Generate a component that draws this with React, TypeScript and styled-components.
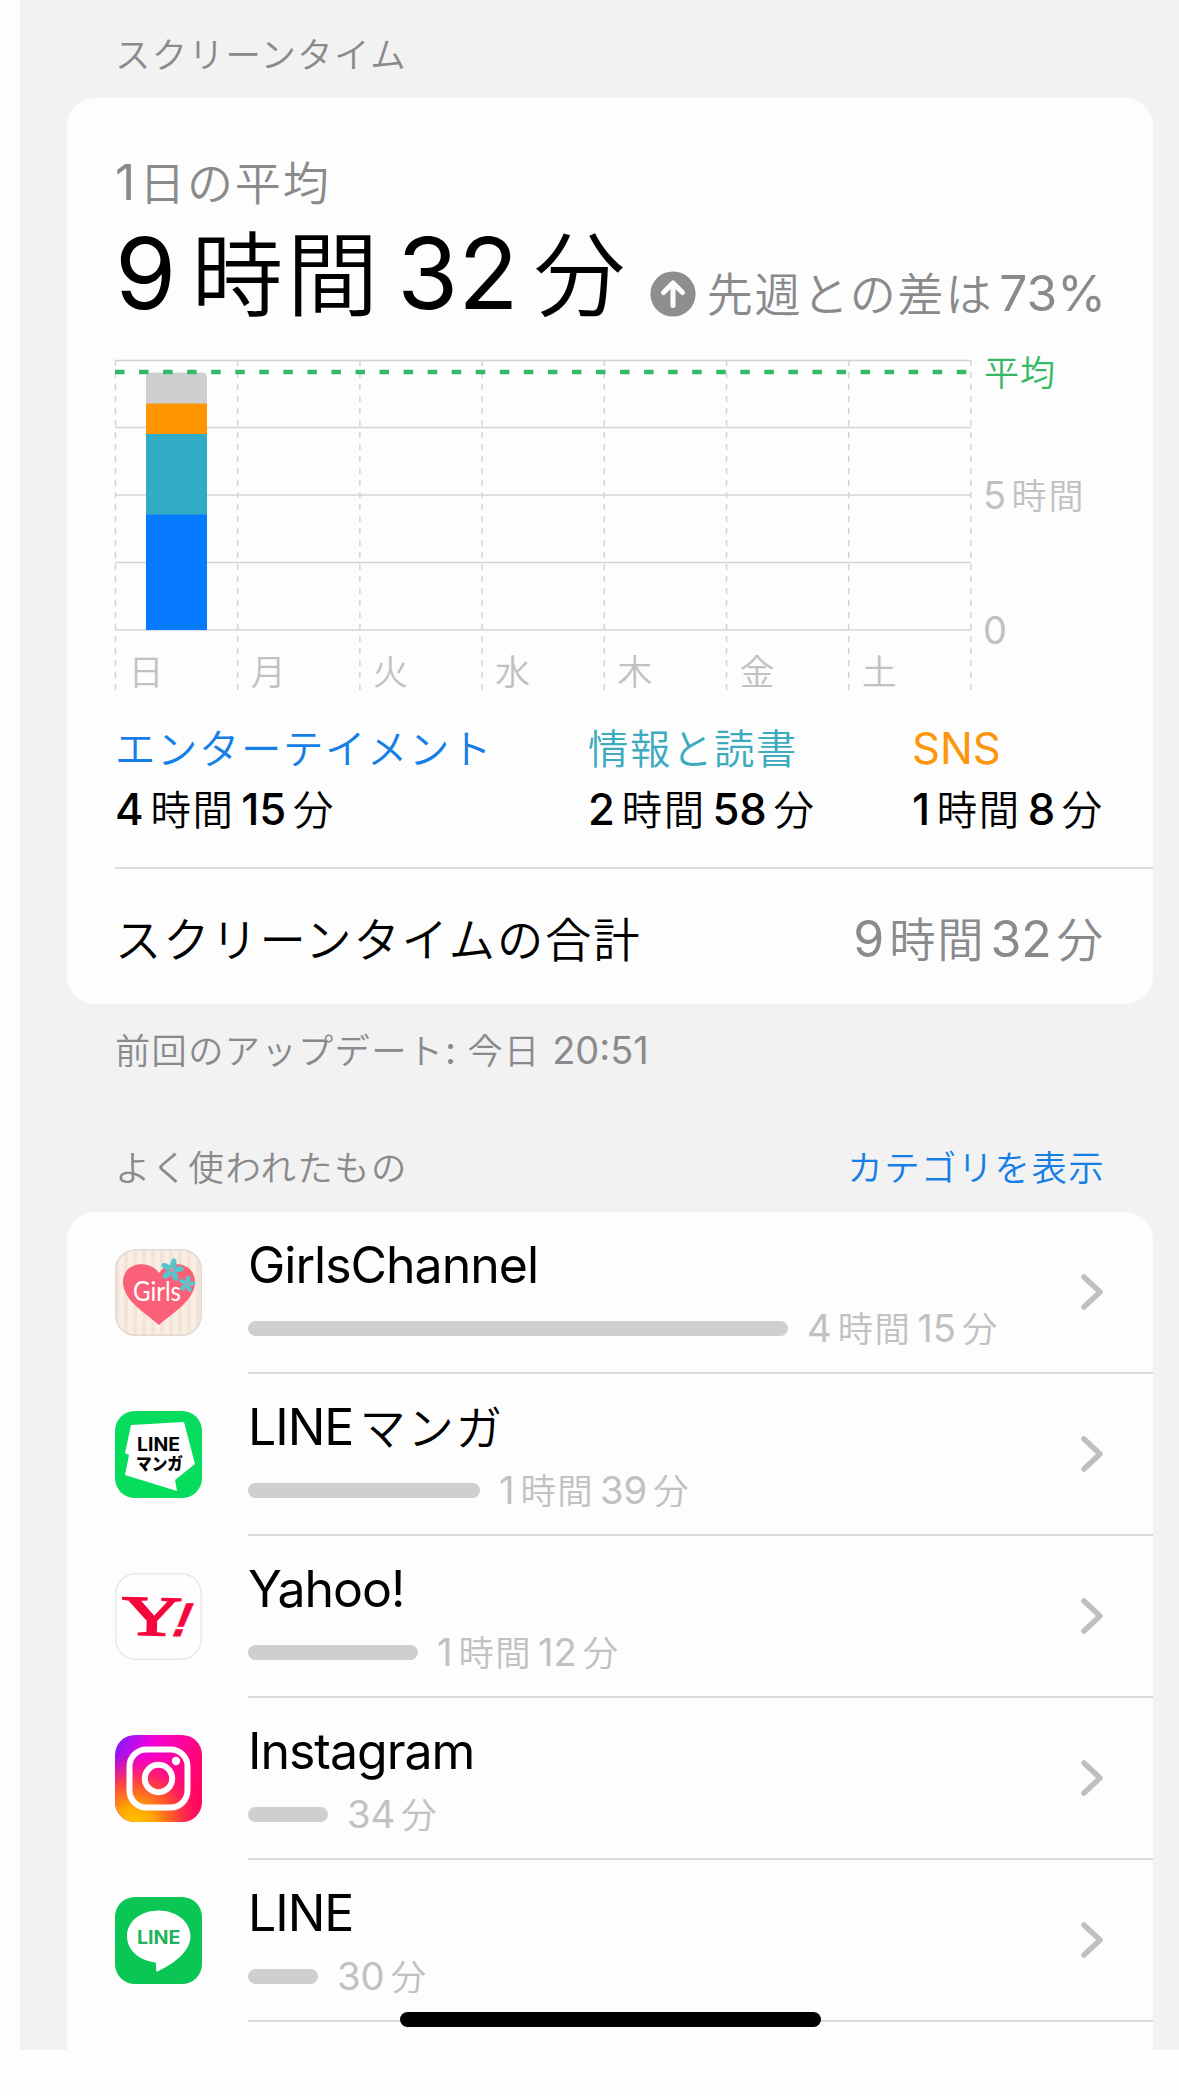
import React from "react";
import styled, { createGlobalStyle } from "styled-components";

const JP = `"Noto Sans CJK JP", sans-serif`;
const LATIN = `Inter, "Noto Sans CJK JP", sans-serif`;

const Global = createGlobalStyle`
  html, body { margin: 0; padding: 0; background: #fdfdfd; }
  * { box-sizing: border-box; }
`;

const Page = styled.div`
  position: relative;
  width: 1179px;
  height: 2096px;
  background: #fdfdfd;
  overflow: hidden;
  font-family: ${JP};
`;

const Sheet = styled.main`
  display: flex;
  flex-direction: column;
  height: 2050px;
  margin-left: 20px;
  padding: 37px 26px 0 47px;
  background: #f2f2f2;
  overflow: hidden;
`;

const SectionHead = styled.div<{ $height: number; $top?: number }>`
  display: flex;
  justify-content: space-between;
  height: ${(p) => p.$height}px;
  padding: ${(p) => p.$top ?? 0}px 48px 0;
`;

const Card = styled.section<{ $grow?: boolean }>`
  flex: ${(p) => (p.$grow ? "1 0 auto" : "0 0 auto")};
  background: #fdfdfd;
  border-radius: ${(p) => (p.$grow ? "28px 28px 0 0" : "28px")};
`;

const TextLine = styled.div<{
  $size: number;
  $lh: number;
  $color: string;
}>`
  font-family: ${JP};
  font-size: ${(p) => p.$size}px;
  line-height: ${(p) => p.$lh}px;
  letter-spacing: 0.04em;
  font-weight: 350;
  color: ${(p) => p.$color};
  white-space: pre;
`;

const Latin = styled.span<{ $before: number; $after: number; $weight: number; $track: number }>`
  font-family: ${LATIN};
  font-size: 1.08em;
  line-height: 0;
  font-weight: ${(p) => p.$weight};
  letter-spacing: ${(p) => p.$track}em;
  margin-left: ${(p) => p.$before}em;
  margin-right: ${(p) => p.$after}em;
`;

type LabelProps = {
  children: string;
  size: number;
  lh: number;
  color: string;
  gap?: number;
  latinWeight?: number;
  latinTrack?: number;
};

/* Sets Japanese and Latin runs in their own faces, with a little air between them. */
function Label({ children, size, lh, color, gap = 0.12, latinWeight = 400, latinTrack = 0 }: LabelProps) {
  const runs = children.match(/[\x20-\x7e]+|[^\x20-\x7e]+/g) ?? [];
  return (
    <TextLine $size={size} $lh={lh} $color={color}>
      {runs.map((run, i) =>
        /^[\x20-\x7e]/.test(run) ? (
          <Latin
            key={i}
            $before={i > 0 ? gap : 0}
            $after={i < runs.length - 1 ? gap : 0}
            $weight={latinWeight}
            $track={latinTrack}
          >
            {run}
          </Latin>
        ) : (
          <React.Fragment key={i}>{run}</React.Fragment>
        )
      )}
    </TextLine>
  );
}

const Summary = styled.div`
  display: flex;
  flex-direction: column;
  padding: 58px 0 36px 48px;
`;

const Headline = styled.div`
  display: flex;
  justify-content: space-between;
  align-items: flex-end;
  margin-top: 20px;
  padding-right: 47px;
`;

const Change = styled.div`
  display: flex;
  align-items: center;
  gap: 11px;
  margin-bottom: -3px;
`;

const UpIcon = styled.svg`
  width: 46px;
  height: 46px;
  margin-top: 7px;
`;

const Plot = styled.svg`
  display: block;
  overflow: visible;
  width: 1030px;
  height: 345px;
  margin: 36px 0 29px -2px;
`;

const Legend = styled.div`
  display: grid;
  grid-template-columns: 473px 324px auto;
`;

const LegendItem = styled.div`
  display: flex;
  flex-direction: column;
  gap: 15px;
`;

const TotalRow = styled.div`
  display: flex;
  justify-content: space-between;
  align-items: center;
  height: 137px;
  margin-left: 48px;
  padding-right: 48px;
  border-top: 2px solid #dcdcdd;
`;

const AppRow = styled.div`
  display: grid;
  grid-template-columns: 87px 1fr;
  align-items: center;
  column-gap: 46px;
  height: 162px;
  padding-left: 48px;
`;

const AppIcon = styled.svg`
  width: 87px;
  height: 87px;
  margin-bottom: 2px;
`;

const AppBody = styled.div`
  display: flex;
  justify-content: space-between;
  align-items: center;
  height: 162px;
  padding-right: 49px;
  border-bottom: 2px solid #dcdcdd;
`;

const AppInfo = styled.div`
  display: flex;
  flex-direction: column;
  gap: 21px;
  margin-top: -1px;
`;

const Usage = styled.div`
  display: flex;
  align-items: center;
  gap: 19px;
`;

const UsageBar = styled.div<{ $width: number }>`
  width: ${(p) => p.$width}px;
  height: 15px;
  margin-top: 3px;
  border-radius: 8px;
  background: #cfcfcf;
`;

const ChevronIcon = styled.svg`
  width: 24px;
  height: 38px;
`;

const HomeIndicator = styled.div`
  position: absolute;
  left: 400px;
  top: 2012px;
  width: 421px;
  height: 15px;
  border-radius: 8px;
  background: #000;
`;

const GREY = "#8a8a8c";
const LIGHT = "#c1c1c3";

const DAYS = ["日", "月", "火", "水", "木", "金", "土"];
const STEP = 122.2;

function WeekChart() {
  return (
    <Plot viewBox="113 350 1030 345">
      {[360.5, 427.5, 495, 562.5, 630].map((y) => (
        <line key={y} x1="115" x2="971" y1={y} y2={y} stroke="#d4d4d6" strokeWidth="1.6" />
      ))}
      {[0, 1, 2, 3, 4, 5, 6, 7].map((i) => (
        <line
          key={i}
          x1={115.5 + i * STEP}
          x2={115.5 + i * STEP}
          y1="360"
          y2="691"
          stroke="#d4d4d6"
          strokeWidth="1.5"
          strokeDasharray="6 6"
        />
      ))}
      <path d="M146 404V378q0-5.500 5.500-5.500h50q5.500 0 5.500 5.500V404z" fill="#cfcfcf" />
      <rect x="146" y="403.500" width="61" height="31" fill="#ff9500" />
      <rect x="146" y="434" width="61" height="81" fill="#30adc4" />
      <rect x="146" y="514.500" width="61" height="115.500" fill="#067bff" />
      <line x1="115" x2="970" y1="372" y2="372" stroke="#36b966" strokeWidth="4.500" strokeDasharray="9.500 14.550" />
      {DAYS.map((d, i) => (
        <text
          key={d}
          x={146 + i * STEP}
          y="684.500"
          textAnchor="middle"
          fontFamily={JP}
          fontWeight="350"
          fontSize="35"
          fill={LIGHT}
        >
          {d}
        </text>
      ))}
      <g fontFamily={JP} fontWeight="350" fontSize="35" fill={LIGHT}>
        <text x="984" y="385.500" fill="#36b966" letterSpacing="1">平均</text>
        <text x="983" y="508.500">
          <tspan fontFamily={LATIN} fontWeight="400" fontSize="38">5</tspan>
          <tspan dx="5.500" letterSpacing="2">時間</tspan>
        </text>
        <text x="983" y="644" fontFamily={LATIN} fontWeight="400" fontSize="38">0</text>
      </g>
    </Plot>
  );
}

function Flower({ x, y, r }: { x: number; y: number; r: number }) {
  return (
    <g transform={`translate(${x} ${y}) scale(${r})`}>
      {[0, 72, 144, 216, 288].map((a) => (
        <ellipse key={a} cx="0" cy="-0.600" rx="0.280" ry="0.480" fill="#55c6cd" transform={`rotate(${a + 12})`} />
      ))}
      <circle r="0.180" fill="#e58ea0" />
    </g>
  );
}

function GirlsIcon() {
  return (
    <AppIcon viewBox="0 0 87 87">
      <defs>
        <pattern id="stripes" width="9" height="87" patternUnits="userSpaceOnUse">
          <rect width="9" height="87" fill="#faeee2" />
          <rect width="4" height="87" fill="#f3e4d9" />
        </pattern>
      </defs>
      <rect x="0.750" y="0.750" width="85.500" height="85.500" rx="20" fill="url(#stripes)" stroke="#e2d8d2" strokeWidth="1.500" />
      <path d="M44 76C32 65 8 52 8 33C8 13 34 10 44 24C54 10 80 13 80 33C80 52 56 65 44 76z" fill="#fa6077" />
      <Flower x={57} y={21} r={11} />
      <Flower x={72} y={35} r={8} />
      <text x="18" y="52" fontFamily={`Lato, ${LATIN}`} fontSize="26" fontWeight="400" fill="#fff" textLength="48" lengthAdjust="spacingAndGlyphs">
        Girls
      </text>
    </AppIcon>
  );
}

function MangaIcon() {
  return (
    <AppIcon viewBox="0 0 87 87">
      <rect width="87" height="87" rx="20" fill="#06dd5d" />
      <path d="M16 14L69 11L80 53L60 69L62 80L10 64L14 44L10 42z" fill="#fff" />
      <text x="22" y="40" fontFamily={LATIN} fontSize="19" fontWeight="750" fill="#000" textLength="43" lengthAdjust="spacingAndGlyphs">
        LINE
      </text>
      <text x="21" y="58.500" fontFamily={JP} fontSize="17" fontWeight="900" fill="#000" textLength="47" lengthAdjust="spacingAndGlyphs">
        マンガ
      </text>
    </AppIcon>
  );
}

function YahooIcon() {
  return (
    <AppIcon viewBox="0 0 87 87">
      <rect x="0.750" y="0.750" width="85.500" height="85.500" rx="20" fill="#fefefe" stroke="#e9e9ea" strokeWidth="1.500" />
      <g fill="#f5063c" stroke="#f5063c">
        <text
          x="7"
          y="62"
          fontFamily={`"Liberation Serif", serif`}
          fontSize="56"
          strokeWidth="1.800"
          textLength="60"
          lengthAdjust="spacingAndGlyphs"
          transform="rotate(1.500 36 44)"
        >
          Y
        </text>
        <text
          x="0"
          y="0"
          fontFamily={`"Liberation Sans", sans-serif`}
          fontWeight="700"
          fontSize="47"
          strokeWidth="1"
          transform="translate(54 63) skewX(-22)"
        >
          !
        </text>
      </g>
    </AppIcon>
  );
}

function InstagramIcon() {
  return (
    <AppIcon viewBox="0 0 87 87">
      <defs>
        <linearGradient id="igBase" x1="0" y1="0.050" x2="1" y2="0.550">
          <stop offset="0" stopColor="#7a1cff" />
          <stop offset="0.350" stopColor="#f200d8" />
          <stop offset="0.700" stopColor="#ff0590" />
          <stop offset="1" stopColor="#ff0560" />
        </linearGradient>
        <radialGradient id="igWarm" cx="0.220" cy="1.050" r="0.850">
          <stop offset="0" stopColor="#ffc800" />
          <stop offset="0.280" stopColor="#ffa500" />
          <stop offset="0.600" stopColor="#ff4b30" stopOpacity="0.900" />
          <stop offset="1" stopColor="#ff0a70" stopOpacity="0" />
        </radialGradient>
      </defs>
      <rect width="87" height="87" rx="20" fill="url(#igBase)" />
      <rect width="87" height="87" rx="20" fill="url(#igWarm)" />
      <g fill="none" stroke="#fff" strokeWidth="6">
        <rect x="14.500" y="14.500" width="58" height="58" rx="17" />
        <circle cx="43.500" cy="43.500" r="13.700" />
      </g>
      <circle cx="61" cy="26" r="4.200" fill="#fff" />
    </AppIcon>
  );
}

function LineIcon() {
  return (
    <AppIcon viewBox="0 0 87 87">
      <rect width="87" height="87" rx="20" fill="#0ac755" />
      <path d="M43.500 13.500C61 13.500 75.500 24.500 75.500 39C75.500 55 58 67 42.500 74.500C40 75 42 70 40.500 65.500C24 63.500 12 53 12 39C12 24.500 26 13.500 43.500 13.500z" fill="#fff" />
      <text x="22" y="46.500" fontFamily={LATIN} fontSize="19" fontWeight="700" fill="#20b25c" textLength="43.500" lengthAdjust="spacingAndGlyphs">
        LINE
      </text>
    </AppIcon>
  );
}

const APPS = [
  { name: "GirlsChannel", time: "4時間15分", width: 540, Icon: GirlsIcon },
  { name: "LINEマンガ", time: "1時間39分", width: 232, Icon: MangaIcon },
  { name: "Yahoo!", time: "1時間12分", width: 170, Icon: YahooIcon },
  { name: "Instagram", time: "34分", width: 80, Icon: InstagramIcon },
  { name: "LINE", time: "30分", width: 70, Icon: LineIcon },
];

const CATEGORIES = [
  { name: "エンターテイメント", time: "4時間15分", color: "#167fe6" },
  { name: "情報と読書", time: "2時間58分", color: "#3cabbd" },
  { name: "SNS", time: "1時間8分", color: "#fc960a" },
];

export default function App() {
  return (
    <Page>
      <Global />
      <Sheet>
        <SectionHead $height={61}>
          <Label size={35.400} lh={32} color={GREY}>スクリーンタイム</Label>
        </SectionHead>
        <Card>
          <Summary>
            <Label size={46} lh={48} color={GREY} gap={0.08}>1日の平均</Label>
            <Headline>
              <Label size={91.500} lh={90} color="#000" gap={0.155}>9時間32分</Label>
              <Change>
                <UpIcon viewBox="0 0 46 46">
                  <circle cx="23" cy="23" r="22.600" fill="#8e8e90" />
                  <path d="M23 34.500V13M13.500 21.500L23 12L32.500 21.500" fill="none" stroke="#fdfdfd" strokeWidth="5" strokeLinecap="round" strokeLinejoin="round" />
                </UpIcon>
                <Label size={46} lh={48} color={GREY}>先週との差は73%</Label>
              </Change>
            </Headline>
            <WeekChart />
            <Legend>
              {CATEGORIES.map((c) => (
                <LegendItem key={c.name}>
                  <Label size={40.400} lh={46} color={c.color}>{c.name}</Label>
                  <Label size={40.400} lh={46} color="#000" latinWeight={450} gap={0.155}>{c.time}</Label>
                </LegendItem>
              ))}
            </Legend>
          </Summary>
          <TotalRow>
            <Label size={46.300} lh={60} color="#000">スクリーンタイムの合計</Label>
            <Label size={46.300} lh={60} color={GREY} gap={0.1}>9時間32分</Label>
          </TotalRow>
        </Card>
        <SectionHead $height={144} $top={27}>
          <Label size={35.200} lh={36} color={GREY} gap={0.02}>前回のアップデート: 今日 20:51</Label>
        </SectionHead>
        <SectionHead $height={64}>
          <Label size={35.400} lh={36} color={GREY}>よく使われたもの</Label>
          <Label size={35.400} lh={36} color="#167fe6">カテゴリを表示</Label>
        </SectionHead>
        <Card $grow>
          {APPS.map(({ name, time, width, Icon }) => (
            <AppRow key={name}>
              <Icon />
              <AppBody>
                <AppInfo>
                  <Label size={46.300} lh={50} color="#000" latinTrack={-0.02}>{name}</Label>
                  <Usage>
                    <UsageBar $width={width} />
                    <Label size={35.400} lh={36} color={LIGHT} gap={0.155}>{time}</Label>
                  </Usage>
                </AppInfo>
                <ChevronIcon viewBox="0 0 24 38">
                  <path d="M4 4L20 19L4 34" fill="none" stroke="#bfbfc1" strokeWidth="5.500" strokeLinecap="round" strokeLinejoin="round" />
                </ChevronIcon>
              </AppBody>
            </AppRow>
          ))}
        </Card>
      </Sheet>
      <HomeIndicator />
    </Page>
  );
}
